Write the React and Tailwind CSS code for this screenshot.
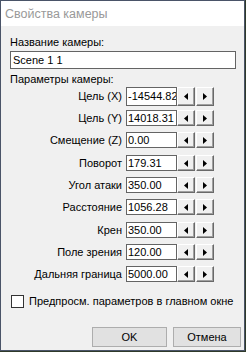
import React from "react";

const font = { fontFamily: '"Liberation Sans", Arial, sans-serif' };

const rows = [
  { label: "Цель (X)", value: "-14544.82", h: "h-[19px]", mt: "mt-[1px]" },
  { label: "Цель (Y)", value: "14018.31", h: "h-[16px]", mt: "mt-[4px]" },
  { label: "Смещение (Z)", value: "0.00", h: "h-[16px]", mt: "mt-[6px]" },
  { label: "Поворот", value: "179.31", h: "h-[16px]", mt: "mt-[7px]" },
  { label: "Угол атаки", value: "350.00", h: "h-[16px]", mt: "mt-[6px]" },
  { label: "Расстояние", value: "1056.28", h: "h-[16px]", mt: "mt-[6px]" },
  { label: "Крен", value: "350.00", h: "h-[16px]", mt: "mt-[7px]" },
  { label: "Поле зрения", value: "120.00", h: "h-[16px]", mt: "mt-[6px]" },
  { label: "Дальняя граница", value: "5000.00", h: "h-[16px]", mt: "mt-[6px]" },
];

function SpinBtn({ dir }) {
  return (
    <div className="w-[18px] h-full flex items-center justify-center bg-[#f0f0f0] border-t border-l border-t-white border-l-white border-r border-b border-r-[#696969] border-b-[#696969] shadow-[inset_-1px_-1px_0_#a0a0a0]">
      <svg width="4" height="7" viewBox="0 0 4 7">
        {dir === "left" ? (
          <polygon points="4,0 0,3.5 4,7" fill="#000" />
        ) : (
          <polygon points="0,0 4,3.5 0,7" fill="#000" />
        )}
      </svg>
    </div>
  );
}

export default function App() {
  return (
    <div className="w-[246px] h-[352px] bg-[#2f3a2a] overflow-hidden" style={font}>
      <div className="w-[245px] h-[351px] border border-[#4a5468] bg-[#f0f0f0] flex flex-col">
        <div className="h-[25px] bg-white flex items-center pl-[4px] text-[12.5px] leading-[14px] text-[#999999] shrink-0">
          Свойства камеры
        </div>
        <div className="flex flex-col pl-[9px] pt-[10px] text-[11px] leading-[13px] text-black">
          <div>Название камеры:</div>
          <div className="mt-[2px] w-[226px] h-[18px] bg-white border border-[#646464] flex items-center pl-[2px]">
            Scene 1 1
          </div>
          <div className="mt-[4px]">Параметры камеры:</div>
          {rows.map((r) => (
            <div key={r.label} className={`flex ${r.mt} ${r.h}`}>
              <div className="w-[112px] flex items-center justify-end">{r.label}</div>
              <div className="ml-[4px] w-[51px] h-full bg-white border border-[#646464] flex items-center pl-[1px] overflow-hidden whitespace-nowrap">
                {r.value}
              </div>
              <SpinBtn dir="left" />
              <div className="ml-[1px] h-full">
                <SpinBtn dir="right" />
              </div>
            </div>
          ))}
          <div className="mt-[13px] flex items-center h-[13px]">
            <div className="ml-[1px] w-[13px] h-[13px] bg-white border border-[#333333]" />
            <div className="ml-[5px] whitespace-nowrap">Предпросм. параметров в главном окне</div>
          </div>
          <div className="mt-[19px] flex">
            <div className="ml-[82px] w-[75px] h-[20px] bg-[#e1e1e1] border border-[#adadad] flex items-center justify-center">
              OK
            </div>
            <div className="ml-[6px] w-[68px] h-[20px] bg-[#e1e1e1] border border-[#adadad] flex items-center justify-center">
              Отмена
            </div>
          </div>
        </div>
      </div>
    </div>
  );
}
